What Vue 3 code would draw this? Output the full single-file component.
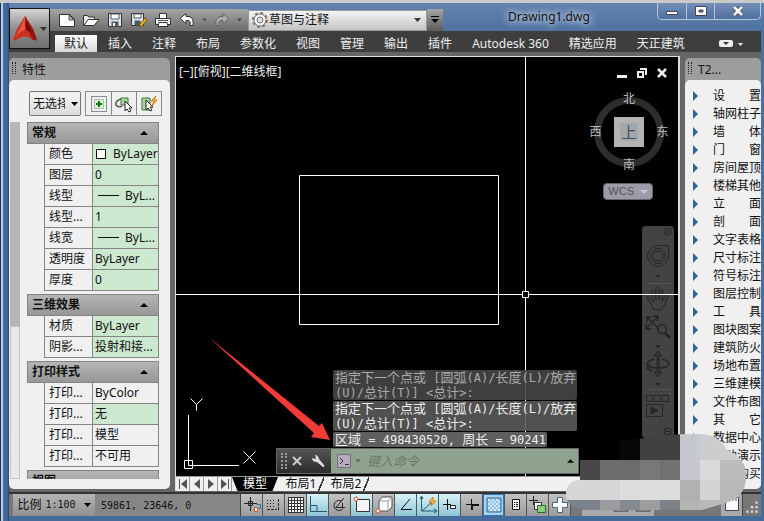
<script setup>
import { ref } from 'vue'

const tabs = ['默认', '插入', '注释', '布局', '参数化', '视图', '管理', '输出', '插件', 'Autodesk 360', '精选应用', '天正建筑']
const activeTab = ref('默认')

const sections = [
  {
    title: '常规',
    rows: [
      { name: '颜色', value: 'ByLayer', mark: 'swatch', green: true },
      { name: '图层', value: '0', green: true },
      { name: '线型', value: 'ByL...', mark: 'line', green: true },
      { name: '线型...', value: '1', green: true },
      { name: '线宽', value: 'ByL...', mark: 'line', green: true },
      { name: '透明度', value: 'ByLayer', green: true },
      { name: '厚度', value: '0', green: true }
    ]
  },
  {
    title: '三维效果',
    rows: [
      { name: '材质', value: 'ByLayer', green: true },
      { name: '阴影...', value: '投射和接...', green: true }
    ]
  },
  {
    title: '打印样式',
    rows: [
      { name: '打印...', value: 'ByColor' },
      { name: '打印...', value: '无', green: true },
      { name: '打印...', value: '模型' },
      { name: '打印...', value: '不可用' }
    ]
  },
  { title: '视图', rows: [] }
]

const tools = ['设置', '轴网柱子', '墙体', '门窗', '房间屋顶', '楼梯其他', '立面', '剖面', '文字表格', '尺寸标注', '符号标注', '图层控制', '工具', '图块图案', '建筑防火', '场地布置', '三维建模', '文件布图', '其它', '数据中心', '帮助演示', '在线购买']

// Han text and Latin text use different sizes in the history lines.
const split = (text) => text.split(/([\u4e00-\u9fff]+)/).filter(Boolean)
const isHan = (part) => /[\u4e00-\u9fff]/.test(part)
const prompt = ['指定下一个点或 [圆弧(A)/长度(L)/放弃', '(U)/总计(T)] <总计>:']
const history = [
  { lines: prompt, dim: true },
  { lines: prompt },
  { lines: ['区域 = 498430520, 周长 = 90241'], last: true }
]

const mosaic = [
  [620, 434, 20, 26, '#080808'], [640, 434, 40, 26, '#414141'], [680, 434, 20, 26, '#c5c9ce'], [700, 434, 46, 26, '#cdcdcd'],
  [566, 460, 34, 20, '#484848'], [600, 460, 40, 20, '#6c6c6c'], [640, 460, 20, 20, '#787878'], [660, 460, 20, 20, '#727272'],
  [680, 460, 20, 20, '#c8c6cc'], [700, 460, 20, 20, '#dcd9d9'], [720, 460, 26, 20, '#bcbcbc'],
  [566, 480, 54, 20, '#d6d6d6'], [620, 480, 60, 20, '#dcdcdc'], [680, 480, 20, 20, '#b1b1b1'], [700, 480, 20, 20, '#d4d4d4'], [720, 480, 26, 20, '#b9b9b9'],
  [566, 500, 34, 10, '#7b828b'], [600, 500, 20, 10, '#9a9ca0'], [620, 500, 20, 10, '#858a90'], [640, 500, 20, 10, '#9b9d9f'],
  [660, 500, 20, 10, '#7c8288'], [680, 500, 20, 10, '#b3b5b3'], [700, 500, 46, 10, '#b9b9b9']
]
</script>

<template>
  <div class="window">
    <header class="top">
      <button class="app-button" aria-label="应用程序菜单">
        <svg class="logo" viewBox="0 0 24 26">
          <path d="M12 0 4 13 0 24q3 1 5-1 6-5 14 0 2 2 5 1L20 13z" fill="#c9301f" />
          <path d="M12 0l8 13 4 11q-3 1-5-1l-2-5z" fill="#96150f" />
          <path d="M12 1 6 14l-4 8q5-7 10-8z" fill="#e8563f" />
          <path d="M12 3l1 11q4 1 6 5l-2-7z" fill="#6f0d0a" />
        </svg>
        <svg class="tri" viewBox="0 0 7 4"><path d="M0 0h7L3.500 4z" fill="#333" /></svg>
      </button>
      <div class="top-rows">
        <div class="titlebar">
          <div class="quick">
            <button aria-label="新建"><svg viewBox="0 0 18 16"><path d="M1.500 2.500h10l5 5v7h-15z" fill="#fff" stroke="#333" /><path d="M11 3v5h5z" fill="#bbb" stroke="#555" /></svg></button>
            <button aria-label="打开"><svg viewBox="0 0 18 16"><path d="M1.500 13V3.500h4l1 1.500h6v3" fill="#eee" stroke="#333" /><path d="M2 13.500l4-6h11l-5 6z" fill="#fff" stroke="#333" /></svg></button>
            <button aria-label="保存"><svg viewBox="0 0 18 16"><path d="M2.500 1.500h13v13h-13z" fill="#dfe5ea" stroke="#333" /><path d="M5 2h8v5H5z" fill="#fff" stroke="#4a5864" /><path d="M5.500 9.500h7v5h-7z" fill="#4b5964" /><path d="M7 11h2v3H7z" fill="#fff" /></svg></button>
            <button aria-label="另存为"><svg viewBox="0 0 18 16"><path d="M1.500 1.500h12v12h-12z" fill="#dfe5ea" stroke="#333" /><path d="M4 2h7v4H4z" fill="#fff" stroke="#4a5864" /><path d="M4.500 8.500h6v5h-6z" fill="#4b5964" /><path d="M9 15l1-3 5-6 2 2-5 6z" fill="#f3b52c" stroke="#6d4c10" /></svg></button>
            <button aria-label="打印"><svg viewBox="0 0 18 16"><path d="M5.500 1.500h7v5h-7z" fill="#fff" stroke="#333" /><path d="M1.500 6.500h15v6h-15z" fill="#f1f1f1" stroke="#333" /><path d="M5 10.500h8l1 4H4z" fill="#fff" stroke="#333" /><path d="M4 8.500h10" stroke="#555" /></svg></button>
            <button aria-label="放弃"><svg viewBox="0 0 18 16"><path d="M2 6.500 8 1.500v3h3q5 1 4 9h-3q1-5-2-5H8v3z" fill="#fff" stroke="#333" /></svg></button>
            <svg class="tri small" viewBox="0 0 7 4"><path d="M0 0h7L3.500 4z" fill="#555" /></svg>
            <button aria-label="重做"><svg viewBox="0 0 18 16"><path d="M16 6.500l-6-5v3H7q-5 1-4 9h3q-1-5 2-5h2v3z" fill="#aaa" stroke="#666" /></svg></button>
            <svg class="tri small" viewBox="0 0 7 4"><path d="M0 0h7L3.500 4z" fill="#444" /></svg>
          </div>
          <div class="workspace">
            <svg class="gear" viewBox="0 0 18 18"><circle cx="9" cy="9" r="7" fill="none" stroke="#777" stroke-width="2" stroke-dasharray="3 2.500" /><circle cx="9" cy="9" r="6" fill="#f6f6f6" stroke="#777" /><circle cx="9" cy="9" r="3" fill="#ddd" stroke="#777" /></svg>
            <select aria-label="工作空间"><option>草图与注释</option></select>
            <svg class="tri" viewBox="0 0 7 4"><path d="M0 0h7L3.500 4z" fill="#333" /></svg>
          </div>
          <button class="customize" aria-label="自定义快速访问工具栏"><svg viewBox="0 0 8 8"><path d="M0 0h8v1H0zM0 3h8L4 7z" fill="#000" /></svg></button>
          <h1>Drawing1.dwg</h1>
          <div class="caption-buttons">
            <button aria-label="最小化"><svg viewBox="0 0 14 12"><path d="M1.500 6.500h11v3h-11z" fill="#fff" stroke="#445" /></svg></button>
            <button aria-label="最大化"><svg viewBox="0 0 14 12"><path d="M1.500 1.500h11v9h-11zM5 5h4v2H5z" fill="#fff" fill-rule="evenodd" stroke="#445" /></svg></button>
            <button class="close" aria-label="关闭"><svg viewBox="0 0 14 12"><path d="M3 2l8 8M11 2l-8 8" stroke="#445" stroke-width="4" /><path d="M3 2l8 8M11 2l-8 8" stroke="#fff" stroke-width="2.500" /></svg></button>
          </div>
        </div>
        <nav class="ribbon">
          <button v-for="tab in tabs" :key="tab" :class="{ active: tab === activeTab }" @click="activeTab = tab">{{ tab }}</button>
          <button class="collapse" aria-label="最小化功能区"><svg viewBox="0 0 24 8"><rect y="0" width="14" height="7" rx="2" fill="#eee" /><path d="M4 2h6L7 5z" fill="#333" /><path d="M19 3h5l-2.500 3z" fill="#eee" /></svg></button>
        </nav>
      </div>
    </header>

    <main>
      <aside class="palette left">
        <h2><i class="grip"></i>特性</h2>
        <div class="body">
          <div class="picker">
            <div class="choice">
              <select aria-label="选择"><option>无选择</option></select>
              <svg class="tri" viewBox="0 0 7 4"><path d="M0 0h7L3.500 4z" fill="#000" /></svg>
            </div>
            <div class="pick-buttons">
              <button aria-label="切换加选"><svg viewBox="0 0 18 18"><path d="M1.500 1.500h15v15h-15z" fill="none" stroke="#333" stroke-dasharray="1 1" /><path d="M4.500 4.500h9v9h-9z" fill="#d6f0d6" stroke="#7a9a7a" stroke-dasharray="1 1" /><path d="M9 6v6M6 9h6" stroke="#087d12" stroke-width="2" /></svg></button>
              <button aria-label="选择对象"><svg viewBox="0 0 18 18"><path d="M6 3h7v7H6z" fill="#a6d69a" stroke="#3f7a3b" /><path d="M6 4q-6 2-5 6 2 3 6 1" fill="none" stroke="#555" stroke-width="1.500" /><path d="M10 6v10l2-2 2 3 2-1-2-3h3z" fill="#fff" stroke="#222" /></svg></button>
              <button aria-label="快速选择"><svg viewBox="0 0 18 18"><path d="M2 3h8v12H2z" fill="#a6d69a" stroke="#3f7a3b" /><path d="M6 5v10l2-2 2 3 2-1-2-3h3z" fill="#fff" stroke="#222" /><path d="M16 1l-5 5h3l-2 5 5-6h-3z" fill="#ffc24a" stroke="#d6761a" /></svg></button>
            </div>
          </div>
          <div class="properties">
            <i class="scroll"><i></i></i>
            <div class="groups">
              <section v-for="section in sections" :key="section.title">
                <h3>{{ section.title }}<svg viewBox="0 0 8 4"><path d="M0 4h8L4 0z" /></svg></h3>
                <table v-if="section.rows.length">
                  <tbody>
                    <tr v-for="(row, i) in section.rows" :key="i">
                      <th scope="row">{{ row.name }}</th>
                      <td :class="{ green: row.green }"><i v-if="row.mark" :class="row.mark"></i>{{ row.value }}</td>
                    </tr>
                  </tbody>
                </table>
              </section>
            </div>
          </div>
        </div>
      </aside>

      <section class="document">
        <div class="canvas">
          <svg class="geometry">
            <g fill="none" stroke="#fff">
              <path d="M123.500 118.500h199v149h-199z" />
              <path d="M12.500 358v50.500H63M8.500 403.500h8v8h-8z" />
              <path d="M14.500 341.500l6 6 6-6M20.500 347.500v6M67.500 394.500l12 12M79.500 394.500l-12 12" />
            </g>
            <path d="M33 280.500 143 369l3-3 8 17-19-3 3-4z" fill="#f23a36" />
          </svg>
          <span class="view-label">[−][俯视][二维线框]</span>
          <div class="view-buttons">
            <button aria-label="最小化视口"><svg viewBox="0 0 10 10"><path d="M0 7h10v3H0z" fill="#eee" /></svg></button>
            <button aria-label="还原视口"><svg viewBox="0 0 10 10"><path d="M3 1h6v6M1 4h5v5H1z" fill="none" stroke="#eee" stroke-width="2" /></svg></button>
            <button aria-label="关闭视口"><svg viewBox="0 0 10 10"><path d="M1 1l8 8M9 1l-8 8" stroke="#eee" stroke-width="2.500" /></svg></button>
          </div>
          <div class="compass">
            <span>北</span><span>西</span><b>上</b><span>东</span><span>南</span>
          </div>
          <button class="wcs">WCS<svg viewBox="0 0 8 4"><path d="M0 0h8L4 4z" fill="#c5c5d5" /></svg></button>
          <div class="navbar">
            <svg viewBox="0 0 32 212" fill="none" stroke="#262626">
              <circle cx="25.500" cy="5.500" r="3.500" /><path d="M24 4l3 3m0-3l-3 3" />
              <path d="M5.500 30a10.500 10.500 0 0 0 21 0V19.500H16A10.500 10.500 0 0 0 5.500 30z" /><circle cx="16" cy="30" r="7.500" /><circle cx="16" cy="30" r="5" />
              <path d="M13 49h6l-3 3z" fill="#262626" stroke="none" /><path d="M5 57.500h24" stroke="#555" />
              <path d="M11 83q-1-5-5-9l-1-3 3 1 4 4-3-11q2-2 3 0l2 9V62q2-2 3 0v12l2-10q2-1 2 1l-1 11 4-7q2-1 2 1l-4 10-3 4z" />
              <path d="M5 91l12 12m-1-13L4 103M5 96v-5h5M11 90h5v5M4 98v5h5" stroke-width="1.500" /><circle cx="20" cy="103" r="4.500" stroke-width="1.500" /><path d="M23 107l5 5" stroke-width="3" />
              <path d="M13 119h6l-3 3z" fill="#262626" stroke="none" />
              <path d="M16 125l-4 5h3v16h-3l4 5 4-5h-3v-16h3z" fill="#343434" /><path d="M12 133q-7 2-7 5 1 4 11 4t11-4q0-3-7-5M8 138l-3 4 5 3" stroke-width="1.500" />
              <path d="M13 157h6l-3 3z" fill="#262626" stroke="none" /><path d="M5 163.500h24" stroke="#555" />
              <path d="M4.500 169.500h6v6h-6zM12.500 169.500h6v6h-6zM20.500 169.500h6v6h-6zM4.500 178.500h16v12h-16z" /><path d="M9 181v7l7-3.500z" fill="#262626" />
              <circle cx="25.500" cy="205.500" r="3.500" /><path d="M23 205.500h5" />
            </svg>
          </div>
          <svg class="crosshair">
            <path d="M349.500 0v234M349.500 241v999M0 237.500h346M353 237.500h1600M346.500 234.500h6v6h-6z" fill="none" stroke="#fff" />
          </svg>
          <div class="history">
            <p v-for="(entry, i) in history" :key="i" :class="{ dim: entry.dim, last: entry.last }">
              <span v-for="line in entry.lines" :key="line" class="line"><template v-for="(part, k) in split(line)" :key="k"><span v-if="isHan(part)" class="han">{{ part }}</span><template v-else>{{ part }}</template></template></span>
            </p>
          </div>
          <div class="command">
            <i class="grip light"></i>
            <button aria-label="关闭命令行"><svg viewBox="0 0 16 16"><path d="M4 4l8 8M12 4l-8 8" stroke="#ccc" stroke-width="2" /></svg></button>
            <button aria-label="自定义"><svg viewBox="0 0 16 16"><path d="M2 5l3 1 1-1-1-3q3 0 4 4l5 6q1 2-1 2l-6-5q-5 0-5-4z" fill="#ddd" /></svg></button>
            <label>
              <svg class="term" viewBox="0 0 24 14"><path d="M.5.5h13v13H.5z" fill="#b4aabb" stroke="#776d80" /><path d="M3 4l3 3-3 3M8 10.500h4" fill="none" stroke="#333" /><path d="M18 5h6l-3 4z" fill="#667566" /></svg>
              <input type="text" placeholder="键入命令" aria-label="命令" />
              <svg class="tri" viewBox="0 0 8 4"><path d="M0 4h8L4 0z" /></svg>
            </label>
          </div>
        </div>
        <div class="layouts">
          <button aria-label="第一个"><svg viewBox="0 0 10 10"><path d="M1 0h1v10H1zM9 0v10L3 5z" /></svg></button>
          <button aria-label="上一个"><svg viewBox="0 0 10 10"><path d="M8 0v10L2 5z" /></svg></button>
          <button aria-label="下一个"><svg viewBox="0 0 10 10"><path d="M2 0v10l6-5z" /></svg></button>
          <button aria-label="最后一个"><svg viewBox="0 0 10 10"><path d="M8 0h1v10H8zM1 0v10l6-5z" /></svg></button>
          <a class="current" href="#model">模型</a>
          <a href="#layout1">布局1</a>
          <a href="#layout2">布局2</a>
        </div>
      </section>

      <aside class="palette right">
        <h2><i class="grip"></i>T2...</h2>
        <ul class="body">
          <li v-for="tool in tools" :key="tool"><svg viewBox="0 0 5 10"><path d="M0 0l5 5-5 5z" fill="#2f6496" /></svg><span><i v-for="ch in tool" :key="ch">{{ ch }}</i></span></li>
        </ul>
      </aside>
    </main>

    <footer class="status">
      <button class="scale">比例 <span>1:100</span><svg class="tri" viewBox="0 0 7 4"><path d="M0 0h7L3.500 4z" /></svg></button>
      <output>59861, 23646, 0</output>
      <div class="toggles">
        <button aria-label="推断约束"><svg viewBox="0 0 20 20"><path d="M8.500 2v14M2 8.500h13" stroke="#222" /><path d="M6.500 6.500h4v4h-4z" fill="none" stroke="#222" /><path d="M12.500 12.500h3v4h-3z" fill="#fff" stroke="#c55a2a" /><path d="M14.500 9.500h4v4h-2" fill="none" stroke="#2878b0" /></svg></button>
        <button aria-label="捕捉"><svg viewBox="0 0 20 20"><path d="M3 5.500h9M3 8.500h9M3 11.500h9" stroke="#222" stroke-dasharray="1 2" /><path d="M3 14.500h10M14.500 4v11" stroke="#222" stroke-dasharray="3 1" /></svg></button>
        <button aria-label="栅格"><svg viewBox="0 0 20 20"><path d="M2.500 2.500h15v15h-15z" fill="#fff" /><path d="M2 2.500h16M2 5.500h16M2 8.500h16M2 11.500h16M2 14.500h16M2 17.500h16M2.500 2v16M5.500 2v16M8.500 2v16M11.500 2v16M14.500 2v16M17.500 2v16" stroke="#333" /></svg></button>
        <button class="on" aria-label="正交"><svg viewBox="0 0 20 20"><path d="M2.500 1v15.500H19M3 10.500h6v6" fill="none" stroke="#235b70" /></svg></button>
        <button aria-label="极轴"><svg viewBox="0 0 20 20"><path d="M14 3 6 12.500h9M12 6.500a5 5 0 1 0 1 7" fill="none" stroke="#222" /><path d="M12.500 8v5" stroke="#222" /></svg></button>
        <button class="on" aria-label="对象捕捉"><svg viewBox="0 0 20 20"><path d="M4.500 4.500h13v12h-13z" fill="#f5f5f8" stroke="#333" /><circle cx="4" cy="4" r="2" fill="#fff" stroke="#e05028" /></svg></button>
        <button aria-label="三维对象捕捉"><svg viewBox="0 0 20 20"><path d="M5 6l3-4h10v10l-4 4H5z" fill="#fafafa" stroke="#555" /><path d="M5 6h9v10M14 6l4-4" fill="none" stroke="#999" /><circle cx="4" cy="16" r="2" fill="#fff" stroke="#e05028" /></svg></button>
        <button class="on" aria-label="对象追踪"><svg viewBox="0 0 20 20"><path d="M14 4 5 14.500h11" fill="none" stroke="#111" /></svg></button>
        <button class="on" aria-label="动态坐标系"><svg viewBox="0 0 20 20"><path d="M3.500 2v14H18M4 16l10-9M2 4l1.500-3L5 4M16 14l3 2-3 2" fill="none" stroke="#235b70" /><path d="M15 2l-4 5h3l-1 4 5-5h-3z" fill="#ffc23b" stroke="#d67a16" /></svg></button>
        <button class="on" aria-label="动态输入"><svg viewBox="0 0 20 20"><path d="M7.500 4v11M3 9.500h8" stroke="#111" /><path d="M10.500 10.500h5v3h-5z" fill="#fff" stroke="#222" /></svg></button>
        <button aria-label="线宽"><svg viewBox="0 0 20 20"><path d="M4 9.500h6M9.500 4v5" stroke="#111" /><path d="M10 9v6M9 10h8" stroke="#111" stroke-width="2" /></svg></button>
        <button class="boxed" aria-label="透明度"><svg viewBox="0 0 20 20"><path d="M3 3h14v14H3z" fill="#8fc1e5" stroke="#2f6fa2" /><path d="M4 5h12M4 9h12M4 13h12" stroke="#d4eafa" stroke-width="2" stroke-dasharray="2 2" /><path d="M6 7h10M6 11h10M6 15h10" stroke="#d4eafa" stroke-width="2" stroke-dasharray="2 2" /></svg></button>
        <button aria-label="快捷特性"><svg viewBox="0 0 20 20"><path d="M6.500 4.500h7v10h-7z" fill="#fff" stroke="#111" /><path d="M8 7.500h1m1 0h2M8 9.500h1m1 0h2M8 11.500h1m1 0h2" stroke="#111" /></svg></button>
        <button aria-label="选择循环"><svg viewBox="0 0 20 20"><path d="M5.500 1v9M1 5.500h9" stroke="#222" /><path d="M6.500 7.500h7v7h-7z" fill="#fff" stroke="#333" /><path d="M9.500 10.500h8v7h-8z" fill="#8fce7f" stroke="#2c6a22" /></svg></button>
        <button aria-label="注释监视器"><svg viewBox="0 0 20 20"><path d="M7.500 2.500h5v5h5v5h-5v5h-5v-5h-5v-5h5z" fill="#fff" stroke="#4d6575" /></svg></button>
      </div>
      <div class="spaces">
        <button class="model">模型</button>
        <button aria-label="布局"><svg viewBox="0 0 20 20"><path d="M3 3h14v13H3z" fill="#ddd" stroke="#333" /></svg></button>
        <button aria-label="图形"><svg viewBox="0 0 20 20"><path d="M3 3h14v13H3z" fill="#ddd" stroke="#333" /></svg></button>
      </div>
      <button class="clean" aria-label="全屏显示"><svg viewBox="0 0 20 20"><path d="M3.500 2.500h13v13h-13z" fill="#fafafa" stroke="#446" /><path d="M4 4.500h12" stroke="#68a" stroke-width="2" stroke-dasharray="2 1" /></svg></button>
      <svg class="resize" viewBox="0 0 16 16"><path d="M11 3h2v2h-2zM7 7h2v2H7zM11 7h2v2h-2zM3 11h2v2H3zM7 11h2v2H7zM11 11h2v2h-2z" fill="#ddd" /></svg>
    </footer>

    <svg class="patch" viewBox="566 434 180 76">
      <defs>
        <clipPath id="patch-shape"><path d="M640 439q20-5 60-5 20 1 26 15 20 8 20 28 0 22-24 27l-20 6H584q-18-2-18-16 0-13 14-14v-20h40v-20z" /></clipPath>
      </defs>
      <g clip-path="url(#patch-shape)" shape-rendering="crispEdges">
        <rect v-for="(cell, i) in mosaic" :key="i" :x="cell[0]" :y="cell[1]" :width="cell[2]" :height="cell[3]" :fill="cell[4]" />
      </g>
    </svg>
  </div>
</template>

<style>
body {
  background: #c9c9c9;
}
</style>

<style scoped>
* {
  box-sizing: border-box;
}
.window {
  position: relative;
  display: flex;
  flex-direction: column;
  height: 100vh;
  padding: 0 3px 5px 9px;
  border-top: 3px solid #c9c9c9;
  background: linear-gradient(90deg, #1c3350 1px, #bccbdd 1px, #bccbdd 3px, #4b6fa3 3px, #3d6092 8px, #1f2f45 8px, transparent 9px), linear-gradient(#6383af, #4e719f 30px, #456a9c);
  font: 12px/16px "Noto Sans", "Noto Sans CJK SC", sans-serif;
  color: #111;
  overflow: hidden;
}
button,
select,
input {
  margin: 0;
  padding: 0;
  border: 0;
  background: none;
  font: inherit;
  color: inherit;
  appearance: none;
  border-radius: 0;
}
svg {
  display: block;
  flex: none;
}
h1,
h2,
h3,
p,
ul {
  margin: 0;
  padding: 0;
  font-size: 12px;
  font-weight: 400;
}
i {
  font-style: normal;
}
.tri {
  width: 7px;
  height: 4px;
}

.top {
  display: flex;
  flex: none;
  height: 49px;
  background: linear-gradient(transparent 28px, #3e3e3e 28px);
}
.app-button {
  display: flex;
  align-items: center;
  justify-content: center;
  gap: 3px;
  width: 41px;
  height: 41px;
  margin-top: 5px;
  border: 1px solid #111;
  background: linear-gradient(#d5d5d5, #8f8f8f 50%, #6f6f6f);
}
.logo {
  width: 24px;
  height: 26px;
}
.top-rows {
  flex: 1;
  min-width: 0;
}
.titlebar {
  display: flex;
  align-items: center;
  height: 28px;
  padding-top: 6px;
}
.quick {
  display: flex;
  align-items: center;
  gap: 6px;
  height: 22px;
  padding: 0 6px 0 8px;
  background: linear-gradient(#a5a5a5, #6c6c6c);
}
.quick button svg {
  width: 18px;
  height: 16px;
}
.tri.small {
  width: 5px;
}
.workspace {
  display: flex;
  align-items: center;
  width: 179px;
  height: 21px;
  padding: 0 5px 0 2px;
  border: 1px solid #999;
  background: linear-gradient(#f4f4f4, #c4c4c4);
}
.gear {
  width: 18px;
  height: 18px;
}
.workspace select {
  flex: 1;
}
.customize {
  display: flex;
  align-items: center;
  justify-content: center;
  width: 16px;
  height: 22px;
  background: linear-gradient(#a5a5a5, #5c5c5c);
}
.customize svg {
  width: 8px;
  height: 8px;
}
h1 {
  flex: 1;
  align-self: flex-start;
  padding-left: 65px;
  text-shadow: 0 0 6px #dde6f2, 0 0 8px #dde6f2;
}
.caption-buttons {
  display: flex;
  align-self: flex-start;
  height: 17px;
  margin-top: -6px;
  border: 1px solid #b6c5da;
  border-top: 0;
  border-radius: 0 0 5px 5px;
  background: linear-gradient(#7590b8, #4f6f9d);
}
.caption-buttons button {
  display: flex;
  align-items: center;
  justify-content: center;
  width: 28px;
  border-left: 1px solid #b6c5da;
}
.caption-buttons button:first-child {
  border-left: 0;
}
.caption-buttons .close {
  width: 46px;
}
.caption-buttons svg {
  width: 14px;
  height: 12px;
}
.ribbon {
  display: flex;
  align-items: flex-end;
  height: 21px;
  padding-left: 5px;
  color: #eee;
  white-space: nowrap;
}
.ribbon button {
  height: 17px;
  margin-right: 20px;
  line-height: 16px;
}
.ribbon .active {
  width: 42px;
  margin-right: 11px;
  background: linear-gradient(#fff, #d8d8d8);
  color: #222;
}
.ribbon .collapse {
  margin: 0 18px 0 auto;
}
.collapse svg {
  width: 24px;
  height: 8px;
}

main {
  display: flex;
  flex: 1;
  min-height: 0;
  gap: 5px;
  padding-top: 4px;
  background: #666;
}
.palette {
  display: flex;
  flex: none;
  flex-direction: column;
  margin: 2px 0 3px;
  border-radius: 5px;
  background: #9d9d9d;
  overflow: hidden;
}
.left {
  width: 161px;
}
.right {
  width: 76px;
}
h2 {
  display: flex;
  gap: 6px;
  height: 22px;
  padding: 4px 0 0 3px;
}
.grip {
  width: 4px;
  height: 12px;
  border: dotted #222;
  border-width: 0 1px;
}
.grip.light {
  width: 6px;
  height: 16px;
  border: dotted #999;
  border-width: 0 2px;
}
.body {
  display: flex;
  flex: 1;
  flex-direction: column;
  min-height: 0;
  border-radius: 5px 5px 0 0;
  background: #f0f0f0;
}
.picker {
  display: flex;
  gap: 4px;
  padding: 11px 9px 6px 20px;
}
.choice {
  display: flex;
  align-items: center;
  width: 52px;
  height: 25px;
  padding: 0 3px;
  border: 1px solid #777;
  border-radius: 2px;
  background: linear-gradient(#f5f5f5, #dcdcdc);
}
.choice select {
  width: 32px;
  margin-right: 6px;
}
.pick-buttons {
  display: flex;
  height: 25px;
  border: 1px solid #888;
}
.pick-buttons button {
  display: flex;
  align-items: center;
  justify-content: center;
  width: 25px;
}
.pick-buttons button + button {
  border-left: 1px solid #888;
}
.pick-buttons svg {
  width: 18px;
  height: 18px;
}
.properties {
  display: flex;
  flex: 1;
  min-height: 0;
  gap: 7px;
  margin-bottom: 10px;
  overflow: hidden;
}
.scroll {
  display: flex;
  align-items: flex-end;
  width: 10px;
  margin-left: 1px;
  background: #b5b5b5;
}
.scroll i {
  width: 10px;
  height: 43%;
  border: 1px solid #c4c4c4;
  background: #e9e9e9;
}
.groups {
  display: flex;
  flex: none;
  flex-direction: column;
  gap: 3px;
  width: 132px;
}
h3 {
  display: flex;
  align-items: center;
  justify-content: space-between;
  height: 22px;
  padding: 0 10px 0 4px;
  border: 1px solid #848484;
  background: linear-gradient(#b5b5b5, #979797);
  font-weight: 700;
}
h3 svg {
  width: 8px;
  height: 4px;
}
table {
  width: 115px;
  margin: -1px 0 0 17px;
  border-collapse: collapse;
  table-layout: fixed;
}
th,
td {
  height: 21px;
  padding: 0 0 0 3px;
  border: 1px solid #858585;
  font-weight: 400;
  line-height: 18px;
  text-align: left;
  white-space: nowrap;
  overflow: hidden;
}
td {
  padding-left: 2px;
}
th {
  width: 48px;
  padding-left: 4px;
}
.green {
  background: #cce8cf;
}
.swatch,
.line {
  display: inline-block;
}
.swatch {
  width: 10px;
  height: 10px;
  margin: 0 7px 0 1px;
  border: 1px solid #111;
  background: #fff;
  vertical-align: -1px;
}
td .line {
  width: 21px;
  height: 1px;
  margin: 0 6px 4px 3px;
  background: #111;
}

.document {
  display: flex;
  flex: 1;
  flex-direction: column;
  min-width: 0;
  margin-bottom: 1px;
  border: solid #ddd;
  border-width: 1px 2px 0 1px;
}
.canvas {
  position: relative;
  flex: 1;
  min-height: 0;
  background: #000;
  color: #eee;
  overflow: hidden;
}
.geometry,
.crosshair {
  position: absolute;
  inset: 0;
  width: 100%;
  height: 100%;
}
.crosshair {
  pointer-events: none;
}
.view-label {
  position: absolute;
  top: 7px;
  left: 3px;
}
.view-buttons {
  position: absolute;
  top: 11px;
  right: 11px;
  display: flex;
  gap: 10px;
}
.view-buttons svg {
  width: 10px;
  height: 10px;
}
.compass {
  position: absolute;
  top: 33px;
  right: 6px;
  display: grid;
  grid-template-columns: 19px 48px 19px;
  grid-template-rows: 18px 48px 18px;
  place-items: center;
  color: #bbb;
}
.compass::before {
  content: "";
  position: absolute;
  inset: 7px 8px;
  border: 7px solid #2d2d2d;
  border-radius: 50%;
}
.compass span {
  position: relative;
}
.compass span:first-child,
.compass span:last-child {
  grid-column: 1 / -1;
}
.compass b {
  width: 30px;
  height: 30px;
  border: 6px solid #b3b3b3;
  background: #a1a8ac;
  color: #444d55;
  font-size: 15px;
  font-weight: 400;
  line-height: 18px;
  text-align: center;
}
.wcs {
  position: absolute;
  top: 126px;
  right: 25px;
  display: flex;
  align-items: center;
  gap: 6px;
  height: 17px;
  padding: 0 4px;
  border: 1px solid #666;
  border-radius: 4px;
  background: #9c9ca8;
  color: #555;
  font: 11px/15px "Liberation Sans", sans-serif;
}
.wcs svg {
  width: 8px;
  height: 4px;
}
.navbar {
  position: absolute;
  top: 169px;
  right: 4px;
  border-radius: 4px;
  background: #434343;
}
.navbar svg {
  width: 32px;
  height: 212px;
}
.history {
  position: absolute;
  bottom: 29px;
  left: 157px;
  display: flex;
  flex-direction: column;
  align-items: flex-start;
  gap: 1px;
  color: #eee;
  font: 12px/15px "DejaVu Sans Mono", "Noto Sans CJK SC", monospace;
}
.history p {
  padding: 0 1px 0 2px;
  border-radius: 2px;
  background: rgba(90, 90, 90, 0.9);
  white-space: pre;
}
.history .dim {
  background: rgba(70, 70, 70, 0.9);
  color: #aaa;
}
.history .line {
  display: block;
  height: 15px;
}
.history .last {
  background: #5f5f5f;
}
.han {
  font-size: 13px;
}
.command {
  position: absolute;
  bottom: 2px;
  left: 100px;
  display: flex;
  align-items: center;
  width: 303px;
  height: 26px;
  border: 1px solid #666;
  background: linear-gradient(#555, #2c2c2c);
}
.command > .grip {
  margin: 0 2px 0 4px;
}
.command button {
  margin-right: 5px;
}
.command button svg {
  width: 16px;
  height: 16px;
}
.command label {
  display: flex;
  flex: 1;
  align-items: center;
  height: 24px;
  padding: 0 4px 0 6px;
  background: #8fa38f;
}
.term {
  width: 24px;
  height: 14px;
}
.command input {
  flex: 1;
  min-width: 0;
  margin-left: 6px;
  font-size: 13px;
}
.command input::placeholder {
  color: #6a7a6a;
  font-style: italic;
  opacity: 1;
}
.layouts {
  display: flex;
  height: 15px;
  border-top: 1px solid #999;
  background: #f0f0f0;
}
.layouts button {
  display: flex;
  align-items: center;
  justify-content: center;
  width: 14px;
  border-right: 1px solid #999;
}
.layouts svg {
  width: 10px;
  height: 10px;
  fill: #555;
}
.layouts a {
  position: relative;
  width: 46px;
  color: #111;
  line-height: 14px;
  text-align: center;
  text-decoration: none;
}
.layouts a:not(.current) {
  margin-right: -1px;
}
.layouts a:not(.current)::after {
  content: "";
  position: absolute;
  inset: 0 0 0 auto;
  width: 6px;
  background: linear-gradient(113deg, transparent 45%, #333 46%, #333 60%, transparent 61%);
}
.layouts .current {
  background: #000;
  color: #fff;
  clip-path: polygon(0 0, 100% 0, 88% 100%, 12% 100%);
}

.right .body {
  padding-top: 7px;
  list-style: none;
}
.right li {
  display: flex;
  flex: none;
  align-items: center;
  gap: 15px;
  height: 18px;
  padding-left: 8px;
}
.right li svg {
  width: 5px;
  height: 10px;
}
.right li span {
  display: flex;
  flex: none;
  justify-content: space-between;
  width: 48px;
}

.status {
  display: flex;
  flex: none;
  height: 24px;
  padding-left: 4px;
  border-top: 2px solid #333;
  background: #777;
}
.status button {
  display: flex;
  align-items: center;
  justify-content: center;
}
.status .scale {
  flex: none;
  width: 82px;
  gap: 4px;
  background: linear-gradient(#b5b5b5, #8f8f8f);
}
.scale span,
.status output {
  font: 10px/16px "DejaVu Sans Mono", monospace;
}
.scale .tri {
  margin-left: 4px;
}
.status output {
  flex: none;
  width: 145px;
  padding: 4px 0 0 6px;
  background: #868686;
}
.toggles {
  display: flex;
  border-left: 1px solid #444;
}
.toggles button {
  width: 22px;
  border-right: 1px solid #555;
  background: linear-gradient(#c2c2c2, #9b9b9b);
}
.toggles svg,
.spaces svg,
.clean svg {
  width: 20px;
  height: 20px;
}
.toggles .on {
  background: linear-gradient(#d9f3f8, #8dc4d4);
}
.toggles .boxed {
  background: #a9d2ec;
  box-shadow: inset 0 0 0 1px #2f77b8;
}
.spaces {
  display: flex;
  flex: 1;
  padding-left: 11px;
}
.spaces button {
  width: 22px;
  background: #a9a9a9;
}
.spaces .model {
  width: 28px;
}
.clean {
  width: 22px;
  border-right: 1px solid #444;
  background: #aaa;
}
.resize {
  width: 18px;
  height: 18px;
  align-self: flex-end;
}
.patch {
  position: absolute;
  right: 18px;
  bottom: 11px;
  width: 180px;
  height: 76px;
}
</style>
